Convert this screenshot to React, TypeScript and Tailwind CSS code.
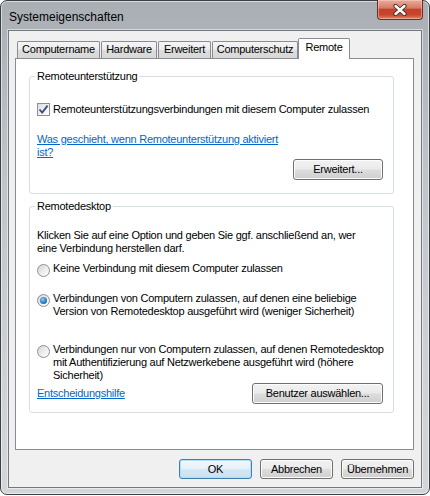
import React from 'react';

const btn =
  'flex items-center justify-center rounded-[3px] border border-[#707070] bg-[linear-gradient(180deg,#f2f2f2_0%,#ebebeb_48%,#dddddd_52%,#cfcfcf_100%)] shadow-[inset_0_0_0_1px_#fcfcfc] text-[11px] leading-[13px] text-black';

function Checkbox() {
  return (
    <div className="flex w-[13px] h-[13px] shrink-0 items-center justify-center border border-[#8e8f8f] bg-[linear-gradient(135deg,#dcdcdc_0%,#f4f4f4_60%,#ffffff_100%)]">
      <svg width="11" height="11" viewBox="0 0 11 11">
        <path d="M1.5 5.5 L4.2 8.6 L9.6 1.6" fill="none" stroke="#3a4e8c" strokeWidth="1.9" />
      </svg>
    </div>
  );
}

function Radio({ checked }: { checked?: boolean }) {
  return (
    <div className="mt-[2px] flex w-[13px] h-[13px] shrink-0 items-center justify-center rounded-full border border-[#8e8f8f] bg-[linear-gradient(135deg,#d4d4d4_0%,#eeeeee_55%,#ffffff_100%)]">
      {checked && (
        <div className="w-[7px] h-[7px] rounded-full bg-[radial-gradient(circle_at_40%_35%,#8ecbf5_0%,#2a7cc8_55%,#1b4f93_100%)]" />
      )}
    </div>
  );
}

function Group({ title, className, children }: { title: string; className: string; children: React.ReactNode }) {
  return (
    <div className={`relative ml-[13px] w-[365px] rounded-[3px] border border-[#d5dfe5] ${className}`}>
      <span className="absolute left-[5px] -top-[7px] bg-white px-[2px] leading-[13px]">{title}</span>
      {children}
    </div>
  );
}

export default function App() {
  const tabs = [
    { label: 'Computername', w: 'w-[83px]' },
    { label: 'Hardware', w: 'w-[56px]' },
    { label: 'Erweitert', w: 'w-[53px]' },
    { label: 'Computerschutz', w: 'w-[86px]' },
  ];

  return (
    <div className="w-[430px] h-[496px] whitespace-nowrap bg-white font-['Liberation_Sans',Arial,sans-serif] text-[11px] tracking-[-0.25px] text-black">
      <div className="relative flex h-[495px] w-[430px] flex-col rounded-[7px] border border-[#3b4046] bg-[linear-gradient(180deg,#a9afb5_0%,#bfc4c9_35%,#ccd0d4_70%,#d3d6d9_100%)] shadow-[inset_0_0_0_1px_rgba(255,255,255,0.55)]">
        {/* title bar */}
        <div className="h-[29px] pl-[8px] pt-[9px] text-[12px] leading-[14px] tracking-normal">Systemeigenschaften</div>
        <div className="absolute top-[-1px] right-[6px] flex h-[20px] w-[46px] items-center justify-center rounded-b-[4px] border border-t-0 border-[#6b2c22] bg-[linear-gradient(180deg,#e9ad9c_0%,#d77a66_42%,#c2412a_50%,#c7472e_78%,#e3845f_100%)] shadow-[inset_0_0_0_1px_rgba(255,220,210,0.45)]">
          <svg width="16" height="12" viewBox="0 0 16 12">
            <path d="M3.5 2 L12.5 10 M12.5 2 L3.5 10" stroke="#3b2a28" strokeWidth="4.2" strokeLinecap="round" />
            <path d="M3.5 2 L12.5 10 M12.5 2 L3.5 10" stroke="#ffffff" strokeWidth="2.4" strokeLinecap="round" />
          </svg>
        </div>

        {/* client area */}
        <div className="mx-[7px] flex h-[458px] flex-col border border-[#737980] bg-[#f0f0f0] pt-[7px] pl-[6px] pr-[7px] shadow-[0_0_0_1px_rgba(255,255,255,0.5)]">
          {/* tabs */}
          <div className="flex h-[20px] items-end pl-[2px]">
            {tabs.map((t) => (
              <div
                key={t.label}
                className={`mr-[1px] flex h-[17px] ${t.w} items-start justify-center rounded-t-[2px] border border-b-0 border-[#898c95] bg-[linear-gradient(180deg,#f5f5f5_0%,#ebebeb_50%,#dddddd_52%,#d8d8d8_100%)] pt-[1px] leading-[13px]`}
              >
                {t.label}
              </div>
            ))}
            <div className="relative z-10 -mb-px -ml-[1px] flex h-[21px] w-[52px] items-start justify-center rounded-t-[2px] border border-b-0 border-[#898c95] bg-white pt-[2px] leading-[13px]">
              Remote
            </div>
          </div>

          {/* tab panel */}
          <div className="flex h-[392px] w-[399px] flex-col border border-[#898c95] bg-white">
            <Group title="Remoteunterstützung" className="mt-[17px] h-[118px]">
              <div className="flex flex-col pl-[7px] pt-[26px]">
                <div className="flex h-[13px] items-center">
                  <Checkbox />
                  <span className="ml-[3px] leading-[13px]">
                    Remoteunterstützungsverbindungen mit diesem Computer zulassen
                  </span>
                </div>
                <a className="mt-[17px] leading-[13px] text-[#0066cc] underline underline-offset-[1px]">
                  Was geschieht, wenn Remoteunterstützung aktiviert
                  <br />
                  ist?
                </a>
                <div className="flex justify-end pr-[10px]">
                  <div className={`${btn} h-[21px] w-[90px]`}>Erweitert...</div>
                </div>
              </div>
            </Group>

            <Group title="Remotedesktop" className="mt-[12px] h-[207px]">
              <div className="flex flex-col pl-[7px] pt-[22px] leading-[13px]">
                <p>
                  Klicken Sie auf eine Option und geben Sie ggf. anschließend an, wer
                  <br />
                  eine Verbindung herstellen darf.
                </p>
                <div className="mt-[7px] flex">
                  <Radio />
                  <span className="ml-[3px]">Keine Verbindung mit diesem Computer zulassen</span>
                </div>
                <div className="mt-[15px] flex">
                  <Radio checked />
                  <span className="ml-[3px]">
                    Verbindungen von Computern zulassen, auf denen eine beliebige
                    <br />
                    Version von Remotedesktop ausgeführt wird (weniger Sicherheit)
                  </span>
                </div>
                <div className="mt-[25px] flex">
                  <Radio />
                  <span className="ml-[3px]">
                    Verbindungen nur von Computern zulassen, auf denen Remotedesktop
                    <br />
                    mit Authentifizierung auf Netzwerkebene ausgeführt wird (höhere
                    <br />
                    Sicherheit)
                  </span>
                </div>
                <div className="mt-[1px] flex items-center justify-between pr-[10px]">
                  <a className="text-[#0066cc] underline underline-offset-[1px]">Entscheidungshilfe</a>
                  <div className={`${btn} h-[21px] w-[131px]`}>Benutzer auswählen...</div>
                </div>
              </div>
            </Group>
          </div>

          {/* dialog buttons */}
          <div className="mt-[9px] flex justify-end gap-[8px]">
            <div className="flex h-[20px] w-[73px] items-center justify-center rounded-[3px] border border-[#3c7fb1] bg-[linear-gradient(180deg,#f4f9fc_0%,#e6f1f8_48%,#d5e8f3_52%,#c9e1f0_100%)] shadow-[inset_0_0_0_1px_#aee0fb] leading-[13px]">
              OK
            </div>
            <div className={`${btn} h-[20px] w-[73px]`}>Abbrechen</div>
            <div className={`${btn} h-[20px] w-[73px]`}>Übernehmen</div>
          </div>
        </div>
      </div>
    </div>
  );
}
